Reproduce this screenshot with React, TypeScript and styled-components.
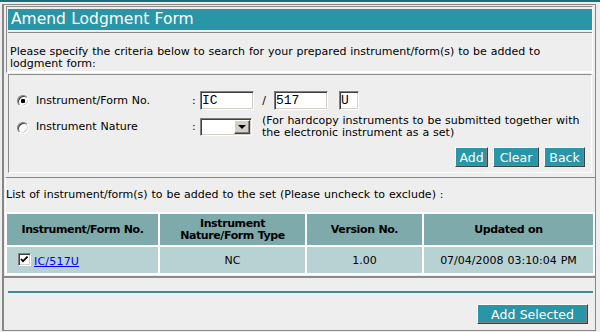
import styled, { createGlobalStyle } from "styled-components";

const GlobalStyle = createGlobalStyle`
  * {
    box-sizing: border-box;
  }
  html, body {
    margin: 0;
    padding: 0;
    background: #eeeeee;
  }
  body {
    width: 600px;
    height: 332px;
    overflow: hidden;
    font-family: "DejaVu Sans", Verdana, sans-serif;
    font-size: 11px;
    word-spacing: 0.4px;
    color: #000;
  }
`;

const TopRule = styled.div`
    height: 2px;
    background: #1b6f7b;
`;

const Frame = styled.div`
    margin: 2px 0 0 2px;
    width: 594px;
    border: 1px solid #868686;
    border-left-width: 2px;
    padding-top: 1px;
`;

const TitlePanel = styled.div`
    margin: 0 2px;
    border: 1px solid;
    border-color: #8a8a8a #ffffff #ffffff #8a8a8a;
`;

const Title = styled.h1`
    margin: 2px 0 2px 1px;
    height: 21px;
    padding-left: 3px;
    background: #2896a6;
    color: #ffffff;
    font-size: 15.5px;
    font-weight: normal;
    line-height: 21px;
`;

const Intro = styled.p`
    margin: 0 0 0 1px;
    border-top: 1px solid #8a8a8a;
    border-bottom: 1px solid #ffffff;
    padding: 13px 0 1px 2px;
    line-height: 12px;
`;

const Criteria = styled.div`
    margin: 1px 3px 4px 4px;
    border: 1px solid;
    border-color: #8a8a8a #ffffff #ffffff #8a8a8a;
    padding: 16px 6px 5px 8px;
`;

const Row = styled.div<{ $top?: number; $align?: string }>`
    display: flex;
    align-items: ${(p) => p.$align || "center"};
    min-height: 19px;
    margin-top: ${(p) => p.$top || 0}px;
`;

const Radio = styled.span<{ $checked?: boolean; $top?: number }>`
    flex: none;
    width: 12px;
    height: 12px;
    margin: ${(p) => p.$top || 0}px 7px 0 0;
    border-radius: 50%;
    border: 1px solid;
    border-color: #808080 #ffffff #ffffff #808080;
    box-shadow: inset 1px 1px 0 #404040, inset -1px -1px 0 #d4d0c8;
    background: ${(p) =>
        p.$checked
            ? "radial-gradient(circle, #000 0 2px, #fff 2.5px)"
            : "#ffffff"};
`;

const Label = styled.span<{ $top?: number }>`
    width: 154px;
    line-height: 12px;
    margin-top: ${(p) => p.$top || 0}px;
`;

const Colon = styled.span<{ $top?: number }>`
    width: 10px;
    padding-left: 2px;
    line-height: 12px;
    margin-top: ${(p) => p.$top || 0}px;
`;

const TextBox = styled.input<{ $width: number }>`
    width: ${(p) => p.$width}px;
    height: 19px;
    margin: 0;
    padding: 0 0 0 1px;
    border: 1px solid;
    border-color: #808080 #ffffff #ffffff #808080;
    box-shadow: inset 1px 1px 0 #404040, inset -1px -1px 0 #d4d0c8;
    background: #ffffff;
    font-family: "Liberation Mono", "Courier New", monospace;
    font-size: 13px;
    color: #000;
    outline: none;
`;

const Slash = styled.span`
    width: 20px;
    text-align: center;
`;

const Gap = styled.span<{ $width: number }>`
    width: ${(p) => p.$width}px;
`;

const SelectBox = styled.div`
    position: relative;
    width: 52px;
    height: 18px;
    margin-top: 3px;
    border: 1px solid;
    border-color: #808080 #ffffff #ffffff #808080;
    box-shadow: inset 1px 1px 0 #404040, inset -1px -1px 0 #d4d0c8;
    background: #ffffff;
`;

const SelectArrow = styled.span`
    position: absolute;
    top: 1px;
    right: 1px;
    width: 16px;
    height: 14px;
    background: #d4d0c8;
    border: 1px solid;
    border-color: #ffffff #404040 #404040 #ffffff;
    box-shadow: inset -1px -1px 0 #808080;
    &::after {
        content: "";
        position: absolute;
        left: 3px;
        top: 4px;
        border-left: 4px solid transparent;
        border-right: 4px solid transparent;
        border-top: 4px solid #000;
    }
`;

const Hint = styled.span`
    margin-left: 10px;
    line-height: 12px;
`;

const ButtonRow = styled.div<{ $top: number; $right?: number }>`
    display: flex;
    justify-content: flex-end;
    gap: 5px;
    margin-top: ${(p) => p.$top}px;
    padding-right: ${(p) => p.$right || 0}px;
`;

const Button = styled.button<{ $width: number }>`
    width: ${(p) => p.$width}px;
    height: 20px;
    margin: 0;
    padding: 0;
    background: #2896a6;
    color: #ffffff;
    font-family: "DejaVu Sans", Verdana, sans-serif;
    font-size: 12.5px;
    word-spacing: 0.4px;
    border: 1px solid;
    border-color: #ffffff #404040 #404040 #ffffff;
    box-shadow: inset -1px -1px 0 #808080;
    cursor: pointer;
`;

const ListSection = styled.div`
    margin-left: 1px;
    border-top: 1px solid #8a8a8a;
    border-left: 1px solid #ffffff;
    padding: 10px 0 1px 0;
`;

const Caption = styled.div`
    line-height: 13px;
    height: 13px;
`;

const Table = styled.table`
    margin: 11px 0 0 -1px;
    width: 590px;
    table-layout: fixed;
    border-spacing: 2px;
    background: #ffffff;
`;

const HeadCell = styled.th<{ $width: number }>`
    width: ${(p) => p.$width}px;
    height: 31px;
    padding: 0;
    background: #7eaaab;
    font-weight: bold;
    letter-spacing: -0.4px;
    line-height: 12px;
    text-align: center;
    color: #000;
`;

const Cell = styled.td<{ $align?: string }>`
    height: 26px;
    padding: 0 0 0 ${(p) => (p.$align === "left" ? 11 : 0)}px;
    background: #b8d2d3;
    text-align: ${(p) => p.$align || "center"};
    line-height: 13px;
`;

const Pick = styled.div`
    display: flex;
    align-items: center;
    gap: 3px;
`;

const CheckBox = styled.span`
    display: inline-flex;
    width: 13px;
    height: 13px;
    border: 1px solid;
    border-color: #808080 #ffffff #ffffff #808080;
    box-shadow: inset 1px 1px 0 #404040, inset -1px -1px 0 #d4d0c8;
    background: #ffffff;
    margin-top: -1px;
`;

const Link = styled.a`
    color: #0000ff;
    text-decoration: underline;
    margin-top: 3px;
    letter-spacing: 0.2px;
`;

const Footer = styled.div`
    border-top: 2px solid #8a8a8a;
    padding: 13px 2px 6px 4px;
`;

const TealLine = styled.div`
    height: 2px;
    background: #428b9b;
`;

export default function App() {
    return (
        <>
            <GlobalStyle />
            <TopRule />
            <Frame>
                <TitlePanel>
                    <Title>Amend Lodgment Form</Title>
                    <Intro>
                        Please specify the criteria below to search for your prepared instrument/form(s) to be added to
                        <br />
                        lodgment form:
                    </Intro>
                </TitlePanel>
                <Criteria>
                    <Row>
                        <Radio $checked />
                        <Label>Instrument/Form No.</Label>
                        <Colon>:</Colon>
                        <TextBox $width={54} defaultValue="IC" />
                        <Slash>/</Slash>
                        <TextBox $width={54} defaultValue="517" />
                        <Gap $width={11} />
                        <TextBox $width={20} defaultValue="U" />
                    </Row>
                    <Row $top={5} $align="flex-start">
                        <Radio $top={7} />
                        <Label $top={6}>Instrument Nature</Label>
                        <Colon $top={6}>:</Colon>
                        <SelectBox>
                            <SelectArrow />
                        </SelectBox>
                        <Hint>
                            (For hardcopy instruments to be submitted together with
                            <br />
                            the electronic instrument as a set)
                        </Hint>
                    </Row>
                    <ButtonRow $top={8}>
                        <Button $width={33}>Add</Button>
                        <Button $width={46}>Clear</Button>
                        <Button $width={41}>Back</Button>
                    </ButtonRow>
                </Criteria>
                <ListSection>
                    <Caption>List of instrument/form(s) to be added to the set (Please uncheck to exclude) :</Caption>
                    <Table>
                        <thead>
                            <tr>
                                <HeadCell $width={151}>Instrument/Form No.</HeadCell>
                                <HeadCell $width={145}>
                                    Instrument
                                    <br />
                                    Nature/Form Type
                                </HeadCell>
                                <HeadCell $width={115}>Version No.</HeadCell>
                                <HeadCell $width={169}>Updated on</HeadCell>
                            </tr>
                        </thead>
                        <tbody>
                            <tr>
                                <Cell $align="left">
                                    <Pick>
                                        <CheckBox>
                                            <svg width="11" height="11" viewBox="0 0 11 11">
                                                <path d="M2 5 L4 7.2 L8.6 2.6" fill="none" stroke="#000" strokeWidth="1.8" />
                                            </svg>
                                        </CheckBox>
                                        <Link href="#">IC/517U</Link>
                                    </Pick>
                                </Cell>
                                <Cell>NC</Cell>
                                <Cell>1.00</Cell>
                                <Cell>07/04/2008 03:10:04 PM</Cell>
                            </tr>
                        </tbody>
                    </Table>
                </ListSection>
                <Footer>
                    <TealLine />
                    <ButtonRow $top={11} $right={5}>
                        <Button $width={111}>Add Selected</Button>
                    </ButtonRow>
                </Footer>
            </Frame>
        </>
    );
}
